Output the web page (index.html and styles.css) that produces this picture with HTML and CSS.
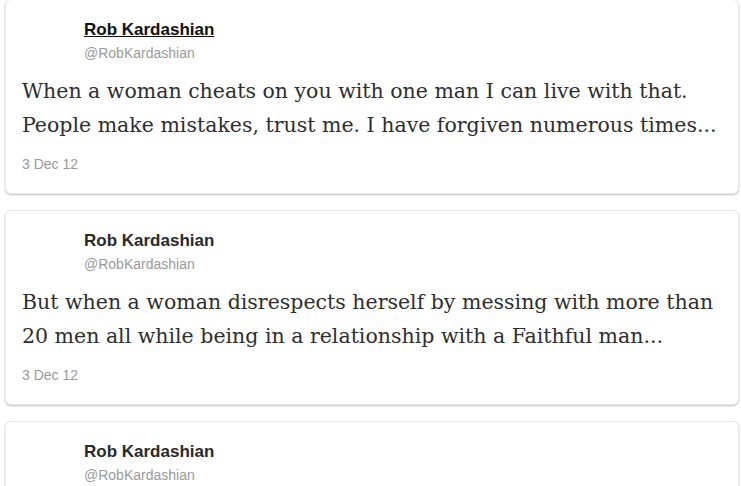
FILE: index.html
```html
<!DOCTYPE html>
<html>
<head>
<meta charset="utf-8">
<link rel="stylesheet" href="styles.css">
</head>
<body>
<div class="feed">
  <div class="card first">
    <div class="head">
      <a class="name hover">Rob Kardashian</a>
      <div class="handle">@RobKardashian</div>
    </div>
    <p class="text">When a woman cheats on you with one man I can live with that.<br>People make mistakes, trust me. I have forgiven numerous times...</p>
    <div class="date">3 Dec 12</div>
  </div>
  <div class="card">
    <div class="head">
      <a class="name">Rob Kardashian</a>
      <div class="handle">@RobKardashian</div>
    </div>
    <p class="text">But when a woman disrespects herself by messing with more than<br>20 men all while being in a relationship with a Faithful man...</p>
    <div class="date">3 Dec 12</div>
  </div>
  <div class="card">
    <div class="head">
      <a class="name">Rob Kardashian</a>
      <div class="handle">@RobKardashian</div>
    </div>
  </div>
</div>
</body>
</html>
```
FILE: styles.css
```css
html, body {
  margin: 0;
  padding: 0;
  background: #ffffff;
  overflow: hidden;
}
.feed {
  display: flex;
  flex-direction: column;
  gap: 16px;
  padding: 0 2px 0 5px;
  margin-top: -1px;
}
.card {
  background: #fff;
  border: 1px solid #e8e8e8;
  border-radius: 6px;
  box-shadow: 0 1px 2px rgba(0,0,0,0.25);
  height: 195px;
  flex-shrink: 0;
  box-sizing: border-box;
  padding: 20px 16px 0 16px;
}
.head {
  padding-left: 62px;
}
.name {
  display: block;
  font-family: "Liberation Sans", Arial, sans-serif;
  font-weight: bold;
  font-size: 17px;
  line-height: 20px;
  color: #2a2a2a;
  text-decoration: none;
}
.name.hover {
  color: #111;
  text-decoration: underline;
}
.handle {
  font-family: "Liberation Sans", Arial, sans-serif;
  font-size: 14px;
  line-height: 16px;
  margin-top: 5px;
  color: #9a9a9a;
}
.text {
  margin: 13px 0 0 0;
  font-family: "DejaVu Serif", Georgia, serif;
  font-size: 20.5px;
  line-height: 34px;
  color: #2e2e2e;
}
.date {
  margin-top: 14px;
  font-family: "Liberation Sans", Arial, sans-serif;
  font-size: 14px;
  line-height: 16px;
  color: #999;
}
```
